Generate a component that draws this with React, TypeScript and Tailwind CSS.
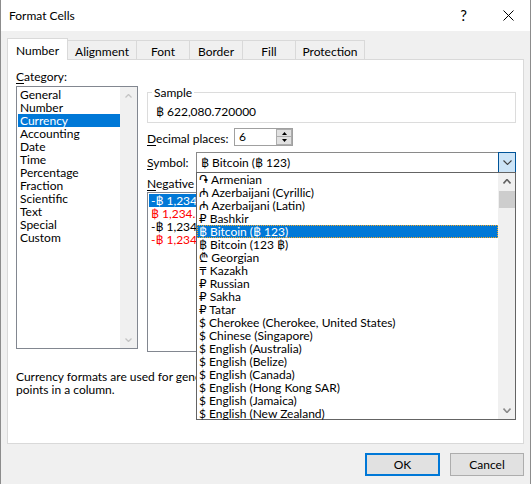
import React from "react";

const categories = [
  "General",
  "Number",
  "Currency",
  "Accounting",
  "Date",
  "Time",
  "Percentage",
  "Fraction",
  "Scientific",
  "Text",
  "Special",
  "Custom",
];

const symbols: [string, string][] = [
  ["֏", "Armenian"],
  ["₼", "Azerbaijani (Cyrillic)"],
  ["₼", "Azerbaijani (Latin)"],
  ["₽", "Bashkir"],
  ["฿", "Bitcoin (฿ 123)"],
  ["฿", "Bitcoin (123 ฿)"],
  ["₾", "Georgian"],
  ["₸", "Kazakh"],
  ["₽", "Russian"],
  ["₽", "Sakha"],
  ["₽", "Tatar"],
  ["$", "Cherokee (Cherokee, United States)"],
  ["$", "Chinese (Singapore)"],
  ["$", "English (Australia)"],
  ["$", "English (Belize)"],
  ["$", "English (Canada)"],
  ["$", "English (Hong Kong SAR)"],
  ["$", "English (Jamaica)"],
  ["$", "English (New Zealand)"],
];

const negatives = [
  { text: "-฿ 1,234.567890", red: false },
  { text: "฿ 1,234.567890", red: true },
  { text: "-฿ 1,234.567890", red: false },
  { text: "-฿ 1,234.567890", red: true },
];

const tabs = [
  { label: "Alignment", w: "w-[70px]" },
  { label: "Font", w: "w-[54px]" },
  { label: "Border", w: "w-[54px]" },
  { label: "Fill", w: "w-[54px]" },
  { label: "Protection", w: "w-[70px]" },
];

function Chevron({ up, color, w = 7, h = 4, sw = 1.3 }: { up?: boolean; color: string; w?: number; h?: number; sw?: number }) {
  const pts = up ? `0.5,${h - 0.5} ${w / 2},0.5 ${w - 0.5},${h - 0.5}` : `0.5,0.5 ${w / 2},${h - 0.5} ${w - 0.5},0.5`;
  return (
    <svg width={w} height={h} viewBox={`0 0 ${w} ${h}`}>
      <polyline points={pts} fill="none" stroke={color} strokeWidth={sw} />
    </svg>
  );
}

function Label({ k, rest }: { k: string; rest: string }) {
  return (
    <span>
      <span className="underline underline-offset-[2px]">{k}</span>
      {rest}
    </span>
  );
}

export default function App() {
  return (
    <div className="w-[532px] h-[484px] bg-white">
      <div className="w-[531px] h-[484px] border-x border-[#8c8c8c] bg-[#f0f0f0] flex flex-col font-['Lato','DejaVu_Sans','Noto_Sans',sans-serif] text-[12px] leading-[13px] text-black">
        {/* title bar */}
        <div className="h-[31px] shrink-0 bg-white flex items-center">
          <span className="ml-[8px] text-[12px]">Format Cells</span>
          <span className="ml-auto text-[15px] leading-[15px]">?</span>
          <svg className="ml-[36px] mr-[16px]" width="11" height="11" viewBox="0 0 11 11">
            <path d="M0.5 0.5 L10.5 10.5 M10.5 0.5 L0.5 10.5" stroke="#000" strokeWidth="1" />
          </svg>
        </div>

        {/* tabs */}
        <div className="flex items-end ml-[6px] mt-[7px]">
          <div className="relative z-10 -mb-px h-[22px] w-[61px] bg-white border border-b-0 border-[#d9d9d9] pt-[5px] text-center">
            Number
          </div>
          {tabs.map((t) => (
            <div
              key={t.label}
              className={`${t.w} -ml-px h-[19px] border border-b-0 border-[#d9d9d9] bg-[#f0f0f0] pt-[4px] text-center`}
            >
              {t.label}
            </div>
          ))}
        </div>

        {/* panel */}
        <div className="relative ml-[6px] w-[517px] h-[385px] border border-[#d9d9d9] bg-white pl-[8px]">
          <div className="flex">
            {/* left column */}
            <div className="w-[122px] pt-[10px]">
              <Label k="C" rest="ategory:" />
              <div className="mt-[3px] h-[263px] border border-[#828790] flex">
                <div className="flex-1 pt-px pl-px">
                  {categories.map((c) => (
                    <div
                      key={c}
                      className={`h-[13px] pl-[2px] ${c === "Currency" ? "bg-[#0078d7] text-white" : ""}`}
                    >
                      {c}
                    </div>
                  ))}
                </div>
                <div className="w-[17px] bg-[#f0f0f0] flex flex-col justify-between">
                  <div className="h-[17px] flex items-center justify-center">
                    <Chevron up color="#c4c4c4" />
                  </div>
                  <div className="h-[17px] flex items-center justify-center">
                    <Chevron color="#c4c4c4" />
                  </div>
                </div>
              </div>
            </div>

            {/* right column */}
            <div className="ml-[9px] w-[369px]">
              <div className="relative mt-[32px] h-[31px] w-[369px] border border-[#dcdcdc] pl-[8px] pt-[12px]">
                <span className="absolute -top-[7px] left-[4px] bg-white px-[2px]">Sample</span>
                ฿ 622,080.720000
              </div>

              <div className="mt-[5px] flex items-center">
                <div className="w-[87px] mt-[2px]">
                  <Label k="D" rest="ecimal places:" />
                </div>
                <div className="h-[18px] w-[59px] border border-[#a0a0a0] flex">
                  <div className="flex-1 pl-[4px] pt-[1px]">6</div>
                  <div className="w-[16px] flex flex-col">
                    <div className="h-[8px] bg-[#e1e1e1] border border-[#adadad] flex items-center justify-center">
                      <svg width="5" height="3" viewBox="0 0 5 3">
                        <path d="M0 3 L2.5 0 L5 3 Z" fill="#000" />
                      </svg>
                    </div>
                    <div className="h-[8px] bg-[#e1e1e1] border border-t-0 border-[#adadad] flex items-center justify-center">
                      <svg width="5" height="3" viewBox="0 0 5 3">
                        <path d="M0 0 L2.5 3 L5 0 Z" fill="#000" />
                      </svg>
                    </div>
                  </div>
                </div>
              </div>

              <div className="mt-[6px] flex items-center">
                <div className="w-[49px]">
                  <Label k="S" rest="ymbol:" />
                </div>
                <div className="h-[21px] w-[320px] border border-[#8a8a8a] flex">
                  <div className="flex-1 pl-[4px] flex items-center">฿ Bitcoin (฿ 123)</div>
                  <div className="-my-px -mr-px w-[18px] h-[21px] bg-[#cce4f7] border border-[#005499] flex items-center justify-center">
                    <Chevron color="#404040" w={9} h={5} sw={1.1} />
                  </div>
                </div>
              </div>

              <div className="mt-[4px]">
                <Label k="N" rest="egative numbers:" />
              </div>
              <div className="mt-[2px] h-[160px] w-[369px] border border-[#828790] pt-px pl-px">
                {negatives.map((n, i) => (
                  <div
                    key={i}
                    className={`h-[13px] pl-[2px] ${i === 0 ? "bg-[#0078d7] text-white" : n.red ? "text-[#ff0000]" : ""}`}
                  >
                    {n.text}
                  </div>
                ))}
              </div>
            </div>
          </div>

          <div className="mt-[18px] w-[490px] overflow-hidden whitespace-nowrap">
            Currency formats are used for general monetary values. Use Accounting formats to align decimal
            <br />
            points in a column.
          </div>

          {/* open symbol dropdown */}
          <div className="absolute left-[188px] top-[112px] w-[320px] h-[248px] border border-[#646464] bg-white flex z-20">
            <div className="flex-1">
              {symbols.map(([s, name], i) => (
                <div
                  key={name}
                  className={`h-[13px] pl-[2px] flex items-center whitespace-nowrap ${
                    i === 4 ? "bg-[#0078d7] text-white outline outline-1 outline-dotted outline-[#f5a623] -outline-offset-1" : ""
                  }`}
                >
                  {s} {name}
                </div>
              ))}
            </div>
            <div className="w-[17px] bg-[#f0f0f0] flex flex-col">
              <div className="h-[17px] flex items-center justify-center">
                <Chevron up color="#606060" w={8} h={5} sw={1.6} />
              </div>
              <div className="mt-[1px] ml-[1px] h-[17px] bg-[#cdcdcd]" />
              <div className="flex-1" />
              <div className="h-[17px] flex items-center justify-center">
                <Chevron color="#8a8a8a" w={8} h={5} sw={1.6} />
              </div>
            </div>
          </div>
        </div>

        {/* buttons */}
        <div className="mt-[9px] mr-[6px] flex justify-end gap-[10px]">
          <div className="w-[75px] h-[23px] border-2 border-[#0078d7] bg-[#e1e1e1] flex items-center justify-center">OK</div>
          <div className="w-[74px] h-[23px] border border-[#adadad] bg-[#e1e1e1] flex items-center justify-center">
            Cancel
          </div>
        </div>
      </div>
    </div>
  );
}
